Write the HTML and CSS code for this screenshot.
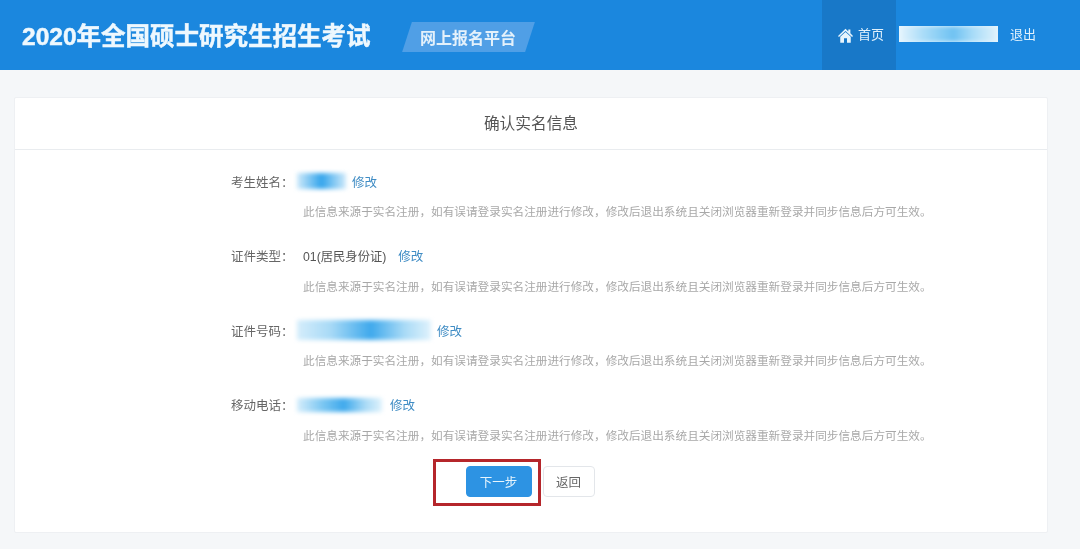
FILE: index.html
```html
<!DOCTYPE html>
<html lang="zh-CN">
<head>
<meta charset="utf-8">
<title>确认实名信息</title>
<link rel="stylesheet" href="styles.css">
</head>
<body>
<header class="topbar">
  <h1 class="site-title">2020年全国硕士研究生招生考试</h1>
  <div class="badge"><span class="badge-text">网上报名平台</span></div>
  <nav class="nav">
    <a class="nav-home">
      <svg class="home-icon" viewBox="0 0 16 16" width="15" height="15"><path fill="#e8f5fd" d="M8 0.8 L0 8.4 L1 9.6 L8 3.2 L15 9.6 L16 8.4 L13.2 5.7 V1.6 H11 V3.6 Z M8 4.2 L2.4 9.3 V15.6 H6.4 V10.8 H9.6 V15.6 H13.6 V9.3 Z"/></svg>
      <span>首页</span>
    </a>
    <span class="nav-user"><span class="nav-user-blur"></span></span>
    <a class="nav-exit">退出</a>
  </nav>
</header>
<main class="page">
  <section class="card">
    <h2 class="card-title">确认实名信息</h2>
    <div class="form">
      <div class="field">
        <div class="line"><span class="label">考生姓名<span class="colon">：</span></span><span class="mask mask-name"></span><a class="edit">修改</a></div>
        <p class="help">此信息来源于实名注册，如有误请登录实名注册进行修改，修改后退出系统且关闭浏览器重新登录并同步信息后方可生效。</p>
      </div>
      <div class="field">
        <div class="line"><span class="label">证件类型<span class="colon">：</span></span><span class="value">01(居民身份证)</span><a class="edit">修改</a></div>
        <p class="help">此信息来源于实名注册，如有误请登录实名注册进行修改，修改后退出系统且关闭浏览器重新登录并同步信息后方可生效。</p>
      </div>
      <div class="field">
        <div class="line"><span class="label">证件号码<span class="colon">：</span></span><span class="mask mask-id"></span><a class="edit">修改</a></div>
        <p class="help">此信息来源于实名注册，如有误请登录实名注册进行修改，修改后退出系统且关闭浏览器重新登录并同步信息后方可生效。</p>
      </div>
      <div class="field">
        <div class="line"><span class="label">移动电话<span class="colon">：</span></span><span class="mask mask-phone"></span><a class="edit">修改</a></div>
        <p class="help">此信息来源于实名注册，如有误请登录实名注册进行修改，修改后退出系统且关闭浏览器重新登录并同步信息后方可生效。</p>
      </div>
    </div>
    <div class="actions">
      <div class="highlight"></div>
      <button class="btn btn-primary">下一步</button>
      <button class="btn btn-default">返回</button>
    </div>
  </section>
</main>
</body>
</html>
```
FILE: styles.css
```css
* { box-sizing: border-box; }
html, body { margin: 0; padding: 0; }
body {
  height: 549px;
  overflow: hidden;
  background: #f5f7f9;
  font-family: "Liberation Sans", "Noto Sans CJK SC", sans-serif;
  color: #555;
  font-size: 12px;
}
.topbar, .card-title, .form, .btn {
  filter: blur(0.35px);
}
.topbar {
  height: 70px;
  background: #1b87de;
  display: flex;
  align-items: center;
  padding-left: 22px;
  color: #fff;
}
.site-title {
  margin: 0 0 2px;
  font-size: 24.5px;
  font-weight: 700;
  -webkit-text-stroke: 0.5px #eef8fe;
  color: #eef8fe;
  white-space: nowrap;
}
.badge {
  margin: 3px 0 0 36px;
  width: 123px;
  height: 30px;
  background: #509fe6;
  transform: skewX(-18deg);
  display: flex;
  align-items: center;
  justify-content: center;
}
.badge-text {
  transform: skewX(18deg);
  font-size: 16px;
  font-weight: 700;
  color: #e4f1fb;
  white-space: nowrap;
}
.nav {
  margin-left: auto;
  height: 70px;
  display: flex;
  align-items: center;
  width: 258px;
}
.nav-home {
  width: 74px;
  height: 70px;
  padding: 0 0 3px 4px;
  background: #1878c8;
  display: flex;
  align-items: center;
  justify-content: center;
  gap: 5px;
  font-size: 13px;
  color: #dff0fc;
  flex: none;
}
.home-icon {
  margin-top: 3px;
}
.nav-user {
  margin: 0 0 2px 3px;
  width: 99px;
  height: 16px;
  background: #eaf6fd;
  overflow: hidden;
  flex: none;
}
.nav-user-blur {
  display: block;
  height: 100%;
  background: linear-gradient(90deg, #e6f5fd, #a9dcf8 25%, #6fc2f2 55%, #a9dcf8 75%, #e0f2fc);
  filter: blur(2px);
}
.nav-exit {
  margin: 0 0 3px 12px;
  font-size: 13px;
  color: #dff0fc;
}
.page {
  padding: 27px 32px 16px 14px;
}
.card {
  height: 436px;
  background: #fff;
  border: 1px solid #eef0f3;
  border-radius: 2px;
}
.card-title {
  margin: 0;
  height: 52px;
  line-height: 52px;
  border-bottom: 1px solid #e9ecef;
  text-align: center;
  font-size: 15.7px;
  font-weight: 400;
  color: #555;
}
.form {
  padding: 21px 0 0 216px;
}
.field {
  height: 74.6px;
}
.field:last-child {
  height: 56px;
}
.line {
  display: flex;
  align-items: center;
  height: 20px;
}
.label {
  width: 72px;
  flex: none;
  font-size: 12.5px;
  color: #666;
  white-space: nowrap;
}
.colon {
  font-family: "Noto Sans CJK TC", sans-serif;
}
.value {
  font-size: 12.3px;
  color: #555;
  white-space: nowrap;
}
.edit {
  margin-left: 12px;
  color: #3f8cc4;
  font-size: 12.5px;
}
.help {
  margin: 11px 0 0 72px;
  font-size: 11.65px;
  line-height: 20px;
  color: #a8a8a8;
  white-space: nowrap;
}
.mask {
  display: block;
  flex: none;
  filter: blur(2px);
  margin-left: -6px;
  margin-right: -6px;
}
.mask-name {
  width: 49px;
  height: 16px;
  background: linear-gradient(90deg, #cfeafa, #34a5ec 50%, #cfeafa);
}
.mask-id {
  width: 134px;
  height: 20px;
  background: linear-gradient(90deg, #d5edfb, #a8daf6 25%, #3fa9ec 55%, #a8daf6 80%, #dff2fc);
}
.mask-phone {
  width: 85px;
  height: 14px;
  margin-right: -4px;
  background: linear-gradient(90deg, #d5edfb, #7cc7f2 30%, #3fa9ec 55%, #a8daf6 80%, #dff2fc);
}
.actions {
  position: relative;
  display: flex;
  justify-content: center;
  gap: 11px;
  padding: 15px 2px 0 0;
}
.btn {
  height: 31px;
  border-radius: 4px;
  font-family: inherit;
  font-size: 12.5px;
  padding: 0;
}
.btn-primary {
  width: 66px;
  border: 1px solid #2d93e3;
  background: #2d93e3;
  color: #e8f5fd;
}
.btn-default {
  width: 52px;
  border: 1px solid #e3e6ea;
  background: #fff;
  color: #666;
}
.highlight {
  position: absolute;
  left: 418px;
  top: 8px;
  width: 108px;
  height: 47px;
  border: 3px solid #b5262b;
}
```
